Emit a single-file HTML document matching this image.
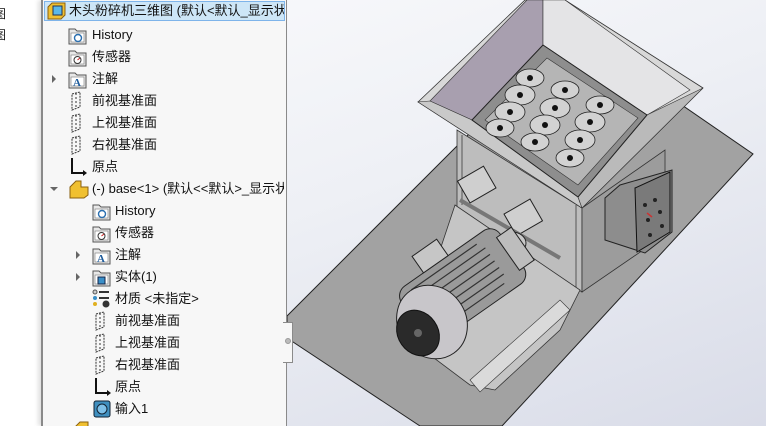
<!DOCTYPE html>
<html><head><meta charset="utf-8"><style>
body{margin:0;width:766px;height:426px;overflow:hidden;position:relative;font-family:"Liberation Sans","Noto Sans CJK SC",sans-serif;font-size:13px;color:#111;}
#bg{position:absolute;left:0;top:0;width:766px;height:426px;background:linear-gradient(160deg,#fbfbfd 0%,#eef0f5 45%,#d9dce8 100%);}
#strip{position:absolute;left:0;top:0;width:41px;height:426px;background:#fff;}
#strip div{position:absolute;left:-6px;font-size:12px;}
#panel{position:absolute;left:41px;top:0;width:243px;height:426px;background:#f7f7f7;border-left:2px solid #8a8a8a;border-right:1px solid #8a8a8a;box-shadow:-3px 0 4px rgba(0,0,0,.12);}
#clip{position:absolute;left:0;top:0;width:284px;height:426px;overflow:hidden;}
.row{position:absolute;height:22px;line-height:22px;white-space:nowrap;}
.sel{position:absolute;left:1px;top:1px;width:241px;height:20px;background:#cde6f7;border:1px solid #7eb4ea;box-sizing:border-box;}
.arr{position:absolute;width:0;height:0;border-left:4px solid #666;border-top:4px solid transparent;border-bottom:4px solid transparent;}
.arrd{position:absolute;width:0;height:0;border-top:4px solid #666;border-left:4px solid transparent;border-right:4px solid transparent;}
svg.ic{position:absolute;}
#tab{position:absolute;left:283px;top:322px;width:9px;height:39px;background:#f7f7f7;border:1px solid #8a8a8a;border-left:none;}
#tab i{position:absolute;left:2px;top:15px;width:6px;height:6px;border-radius:50%;background:#bbb;border:1px solid #999;box-sizing:border-box;}
</style></head><body>
<div id="bg"></div>
<svg style="position:absolute;left:0;top:0" width="766" height="426">
<polygon points="287,316 573,30 753,154 502,426 420,426 287,338" fill="#a2a2a2" stroke="#222" stroke-width="1"/>
<polygon points="457,130 582,208 582,292 457,210" fill="#bdbdbd" stroke="#333" stroke-width="0.8"/>
<polygon points="582,208 665,150 665,235 582,292" fill="#9c9c9c" stroke="#333" stroke-width="0.8"/>
<line x1="462" y1="135" x2="462" y2="205" stroke="#555"/><line x1="576" y1="205" x2="576" y2="288" stroke="#555"/>
<polygon points="455,205 580,290 560,330 495,390 470,385 410,340" fill="#c5c5c5" stroke="#333" stroke-width="0.8"/>
<polygon points="470,380 560,300 570,310 480,392" fill="#dadada" stroke="#333" stroke-width="0.6"/>
<rect x="462" y="172" width="30" height="25" fill="#cfcfcf" stroke="#222" transform="rotate(-30 477 185)"/>
<rect x="508" y="205" width="30" height="25" fill="#cfcfcf" stroke="#222" transform="rotate(-30 523 217)"/>
<line x1="460" y1="200" x2="560" y2="258" stroke="#777" stroke-width="4"/>
<ellipse cx="512" cy="243" rx="14" ry="11" fill="#c8c8c8" stroke="#222"/>
<polygon points="605,198 620,185 672,170 672,232 645,253 605,240" fill="#8d8d8d" stroke="#222"/>
<polygon points="635,188 670,172 670,232 637,252" fill="#7a7a7a" stroke="#111"/>
<g fill="#222"><circle cx="645" cy="205" r="2"/><circle cx="655" cy="200" r="2"/><circle cx="648" cy="220" r="2"/><circle cx="660" cy="212" r="2"/><circle cx="650" cy="235" r="2"/><circle cx="662" cy="226" r="2"/></g>
<line x1="647" y1="213" x2="652" y2="217" stroke="#c33" stroke-width="1.5"/>
<polygon points="418,102 525,0 565,0 703,88 582,208" fill="#d8d8d8" stroke="#333" stroke-width="0.8"/>
<polygon points="430,101 527,0 543,0 543,45 472,120" fill="#a89faf" stroke="#333" stroke-width="0.6"/>
<polygon points="543,0 565,0 690,90 647,115 543,45" fill="#e4e4e6" stroke="#333" stroke-width="0.6"/>
<polygon points="472,120 578,197 582,208 418,102 430,101" fill="#c9c9c9" stroke="#333" stroke-width="0.6"/>
<polygon points="578,197 647,115 703,88 582,208" fill="#bababa" stroke="#333" stroke-width="0.6"/>
<polygon points="472,120 543,45 647,115 578,197" fill="#8e8e8e" stroke="#222"/>
<polygon points="485,120 547,58 638,118 578,185" fill="#b5b5b5" stroke="#333" stroke-width="0.6"/>
<g stroke="#222" stroke-width="0.8" fill="#d2d2d2">
<ellipse cx="530" cy="78" rx="14" ry="9"/><ellipse cx="520" cy="95" rx="15" ry="10"/><ellipse cx="510" cy="112" rx="15" ry="10"/><ellipse cx="500" cy="128" rx="14" ry="9"/>
<ellipse cx="565" cy="90" rx="14" ry="9"/><ellipse cx="555" cy="108" rx="15" ry="10"/><ellipse cx="545" cy="125" rx="15" ry="10"/><ellipse cx="535" cy="142" rx="14" ry="9"/>
<ellipse cx="600" cy="105" rx="14" ry="9"/><ellipse cx="590" cy="122" rx="15" ry="10"/><ellipse cx="580" cy="140" rx="15" ry="10"/><ellipse cx="570" cy="158" rx="14" ry="9"/>
</g>
<g fill="#111"><circle cx="530" cy="78" r="3"/><circle cx="520" cy="95" r="3"/><circle cx="510" cy="112" r="3"/><circle cx="500" cy="128" r="3"/><circle cx="565" cy="90" r="3"/><circle cx="555" cy="108" r="3"/><circle cx="545" cy="125" r="3"/><circle cx="535" cy="142" r="3"/><circle cx="600" cy="105" r="3"/><circle cx="590" cy="122" r="3"/><circle cx="580" cy="140" r="3"/><circle cx="570" cy="158" r="3"/></g>
<g transform="rotate(-35 460 290)">
<rect x="405" y="255" width="120" height="65" rx="12" fill="#9a9a9a" stroke="#222"/>
<g stroke="#333" stroke-width="1.2"><line x1="420" y1="262" x2="500" y2="262"/><line x1="420" y1="270" x2="505" y2="270"/><line x1="420" y1="278" x2="505" y2="278"/><line x1="420" y1="286" x2="505" y2="286"/><line x1="420" y1="294" x2="505" y2="294"/><line x1="420" y1="302" x2="505" y2="302"/><line x1="420" y1="310" x2="500" y2="310"/></g>
<rect x="440" y="235" width="30" height="20" fill="#c6c6c6" stroke="#222"/>
<rect x="520" y="268" width="18" height="40" fill="#bdbdbd" stroke="#222"/>
</g>
<ellipse cx="432" cy="322" rx="34" ry="38" fill="#c8c6ca" stroke="#222" transform="rotate(-35 432 322)"/>
<ellipse cx="418" cy="333" rx="20" ry="24" fill="#2a2a2a" stroke="#111" transform="rotate(-35 418 333)"/>
<circle cx="418" cy="333" r="4" fill="#666"/>
</svg>
<div id="strip"><div style="top:5px">图</div><div style="top:26px">图</div></div>
<div id="panel"><div class="sel"></div></div>
<div id="tab"><i></i></div>
<svg width="0" height="0" style="position:absolute"><defs>
<g id="fold"><path d="M1 4h6l2 2h9v13H1z" fill="#e8e8e8" stroke="#555"/><rect x="3" y="8" width="13" height="9" fill="#fff" stroke="#777" stroke-width=".6"/></g>
<g id="plane"><path d="M4 3l8-2v15l-8 3z" fill="none" stroke="#333" stroke-dasharray="2 1"/><line x1="8" y1="2" x2="8" y2="18" stroke="#333" stroke-dasharray="2 2"/></g>
<g id="orig"><path d="M4 1v15h13" fill="none" stroke="#111" stroke-width="2"/><path d="M15 13l4 3-4 3z" fill="#111"/></g>
</defs></svg>
<div id="clip">
<svg class="ic" style="left:47px;top:2px" width="20" height="18"><path d="M1 5l4-4h13v12l-4 4H1z" fill="#f0c030" stroke="#8a6010"/><rect x="6" y="4" width="9" height="9" fill="#5bb8e8" stroke="#235"/></svg>
<div class="row" style="left:69px;top:0">木头粉碎机三维图 (默认&lt;默认_显示状态</div>
<svg class="ic" style="left:68px;top:25px" width="20" height="20"><use href="#fold"/><circle cx="10" cy="13" r="3.5" fill="none" stroke="#2a6fb0" stroke-width="1.4"/></svg><div class="row" style="left:92px;top:24px">History</div>
<svg class="ic" style="left:68px;top:47px" width="20" height="20"><use href="#fold"/><circle cx="9.5" cy="13" r="3.5" fill="#fff" stroke="#333"/><line x1="9.5" y1="13" x2="12" y2="11" stroke="#c22"/></svg><div class="row" style="left:92px;top:46px">传感器</div>
<div class="arr" style="left:52px;top:75px"></div>
<svg class="ic" style="left:68px;top:69px" width="20" height="20"><use href="#fold"/><text x="5" y="17" font-family="Liberation Serif" font-size="11" font-weight="bold" fill="#1d5a9a">A</text></svg><div class="row" style="left:92px;top:68px">注解</div>
<svg class="ic" style="left:68px;top:91px" width="20" height="20"><use href="#plane"/></svg><div class="row" style="left:92px;top:90px">前视基准面</div>
<svg class="ic" style="left:68px;top:113px" width="20" height="20"><use href="#plane"/></svg><div class="row" style="left:92px;top:112px">上视基准面</div>
<svg class="ic" style="left:68px;top:135px" width="20" height="20"><use href="#plane"/></svg><div class="row" style="left:92px;top:134px">右视基准面</div>
<svg class="ic" style="left:68px;top:157px" width="20" height="20"><use href="#orig"/></svg><div class="row" style="left:92px;top:156px">原点</div>
<div class="arrd" style="left:50px;top:187px"></div>
<svg class="ic" style="left:68px;top:179px" width="22" height="20"><path d="M2 8l6-6h5v6h7v8l-4 3H2z" fill="#f0c030" stroke="#8a6010"/></svg><div class="row" style="left:92px;top:178px">(-) base&lt;1&gt; (默认&lt;&lt;默认&gt;_显示状态</div>
<svg class="ic" style="left:92px;top:201px" width="20" height="20"><use href="#fold"/><circle cx="10" cy="13" r="3.5" fill="none" stroke="#2a6fb0" stroke-width="1.4"/></svg><div class="row" style="left:115px;top:200px">History</div>
<svg class="ic" style="left:92px;top:223px" width="20" height="20"><use href="#fold"/><circle cx="9.5" cy="13" r="3.5" fill="#fff" stroke="#333"/><line x1="9.5" y1="13" x2="12" y2="11" stroke="#c22"/></svg><div class="row" style="left:115px;top:222px">传感器</div>
<div class="arr" style="left:76px;top:251px"></div>
<svg class="ic" style="left:92px;top:245px" width="20" height="20"><use href="#fold"/><text x="5" y="17" font-family="Liberation Serif" font-size="11" font-weight="bold" fill="#1d5a9a">A</text></svg><div class="row" style="left:115px;top:244px">注解</div>
<div class="arr" style="left:76px;top:273px"></div>
<svg class="ic" style="left:92px;top:267px" width="20" height="20"><use href="#fold"/><rect x="6" y="10" width="7" height="7" fill="#3a8fc8" stroke="#124"/></svg><div class="row" style="left:115px;top:266px">实体(1)</div>
<svg class="ic" style="left:92px;top:289px" width="20" height="20"><circle cx="3" cy="3" r="2" fill="#ccc" stroke="#555"/><circle cx="3" cy="9" r="2" fill="#3a8fc8"/><circle cx="3" cy="15" r="2" fill="#e0b020"/><line x1="7" y1="3" x2="17" y2="3" stroke="#333" stroke-width="2"/><line x1="7" y1="9" x2="17" y2="9" stroke="#333" stroke-width="2"/><circle cx="14" cy="15" r="3.5" fill="#333"/></svg><div class="row" style="left:115px;top:288px">材质 &lt;未指定&gt;</div>
<svg class="ic" style="left:92px;top:311px" width="20" height="20"><use href="#plane"/></svg><div class="row" style="left:115px;top:310px">前视基准面</div>
<svg class="ic" style="left:92px;top:333px" width="20" height="20"><use href="#plane"/></svg><div class="row" style="left:115px;top:332px">上视基准面</div>
<svg class="ic" style="left:92px;top:355px" width="20" height="20"><use href="#plane"/></svg><div class="row" style="left:115px;top:354px">右视基准面</div>
<svg class="ic" style="left:92px;top:377px" width="20" height="20"><use href="#orig"/></svg><div class="row" style="left:115px;top:376px">原点</div>
<svg class="ic" style="left:92px;top:399px" width="20" height="20"><rect x="2" y="2" width="16" height="16" rx="2" fill="#3f8fbf" stroke="#123"/><circle cx="10" cy="10" r="5" fill="#7ec0e8" stroke="#123"/></svg><div class="row" style="left:115px;top:398px">输入1</div>
<svg class="ic" style="left:72px;top:420px" width="20" height="8"><path d="M2 8l6-6h8v6z" fill="#f0c030" stroke="#8a6010"/></svg>
</div>
</body></html>
